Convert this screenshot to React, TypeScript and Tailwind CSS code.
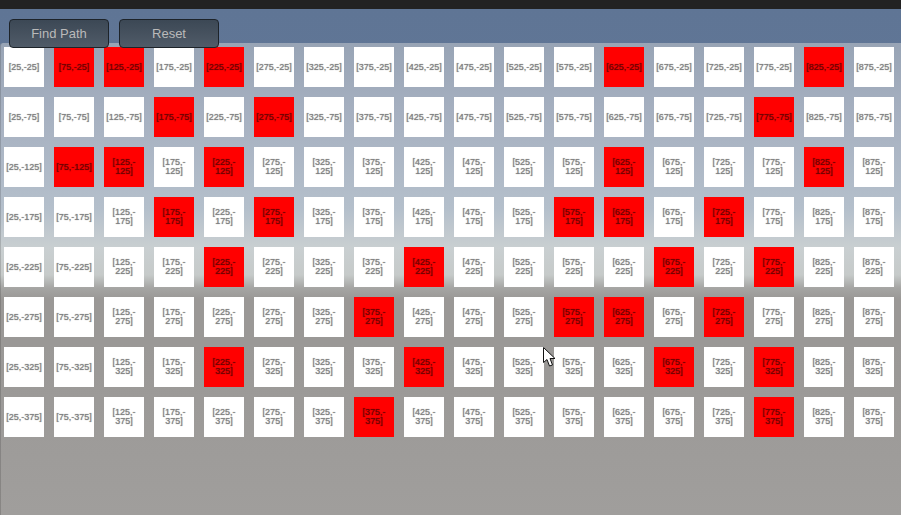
const cols = [25, 75, 125, 175, 225, 275, 325, 375, 425, 475, 525, 575, 625, 675, 725, 775, 825, 875]

// red cells, by row
const rows: { y: number; red: number[] }[] = [
  { y: 25, red: [75, 125, 225, 625, 825] },
  { y: 75, red: [175, 275, 775] },
  { y: 125, red: [75, 125, 225, 625, 825] },
  { y: 175, red: [175, 275, 575, 625, 725] },
  { y: 225, red: [225, 425, 675, 775] },
  { y: 275, red: [375, 575, 625, 725] },
  { y: 325, red: [225, 425, 675, 775] },
  { y: 375, red: [375, 775] },
]

function Cell({ x, y, red }: { x: number; y: number; red: boolean }) {
  return (
    <div className={`w-10 h-10 flex items-center justify-center text-center text-[9px] leading-[9px] [text-shadow:0_0_1px_currentColor] font-['Liberation_Sans',sans-serif] ${red ? 'bg-[#ff0000] text-[#700000]' : 'bg-white text-[#808080]'}`}>
      <span>[{x},-<wbr />{y}]</span>
    </div>
  )
}

function Button({ label }: { label: string }) {
  return (
    <button className="w-[100px] h-[29px] rounded-[4px] border border-[#1d2329] bg-gradient-to-b from-[#3c4855] to-[#505b68] text-[13px] text-[#bababa] font-['Liberation_Sans',sans-serif]">
      {label}
    </button>
  )
}

export default function App() {
  return (
    <div className="relative w-[901px] h-[515px] overflow-hidden flex flex-col bg-[#222222]">
      <div className="h-[9px] shrink-0" />

      <div className="flex-1 flex flex-col bg-gradient-to-b from-[#5f7595] to-[#687b9b]">
        <div className="relative z-10 flex gap-[10px] pl-[9px] pt-[10px]">
          <Button label="Find Path" />
          <Button label="Reset" />
        </div>

        <div className="flex-1 -mt-[5px] border-l border-black/15 pl-[3px] pt-[4px] rounded-tl-[3px] bg-[linear-gradient(to_bottom,#98a4b5_0px,#a6b0c0_70px,#b4bfcb_165px,#c9cfd1_205px,#c6cac9_232px,#a5a5a3_245px,#9a9896_256px,#9a9896_300px,#a09e9c_472px)]">
          <div className="grid grid-cols-[repeat(18,40px)] gap-[10px]">
            {rows.map(row => cols.map(x => (
              <Cell key={`${x}-${row.y}`} x={x} y={row.y} red={row.red.includes(x)} />
            )))}
          </div>
        </div>
      </div>

      {/* mouse pointer */}
      <svg className="absolute left-[543px] top-[347px]" width="14" height="21" viewBox="0 0 14 21">
        <path d="M0.5 0.5 L0.5 15.5 L4 12.5 L6.5 19 L9.5 18 L7 11.5 L12 11.5 Z" fill="#ffffff" stroke="#111111" strokeWidth="1" strokeLinejoin="round" />
      </svg>
    </div>
  )
}
